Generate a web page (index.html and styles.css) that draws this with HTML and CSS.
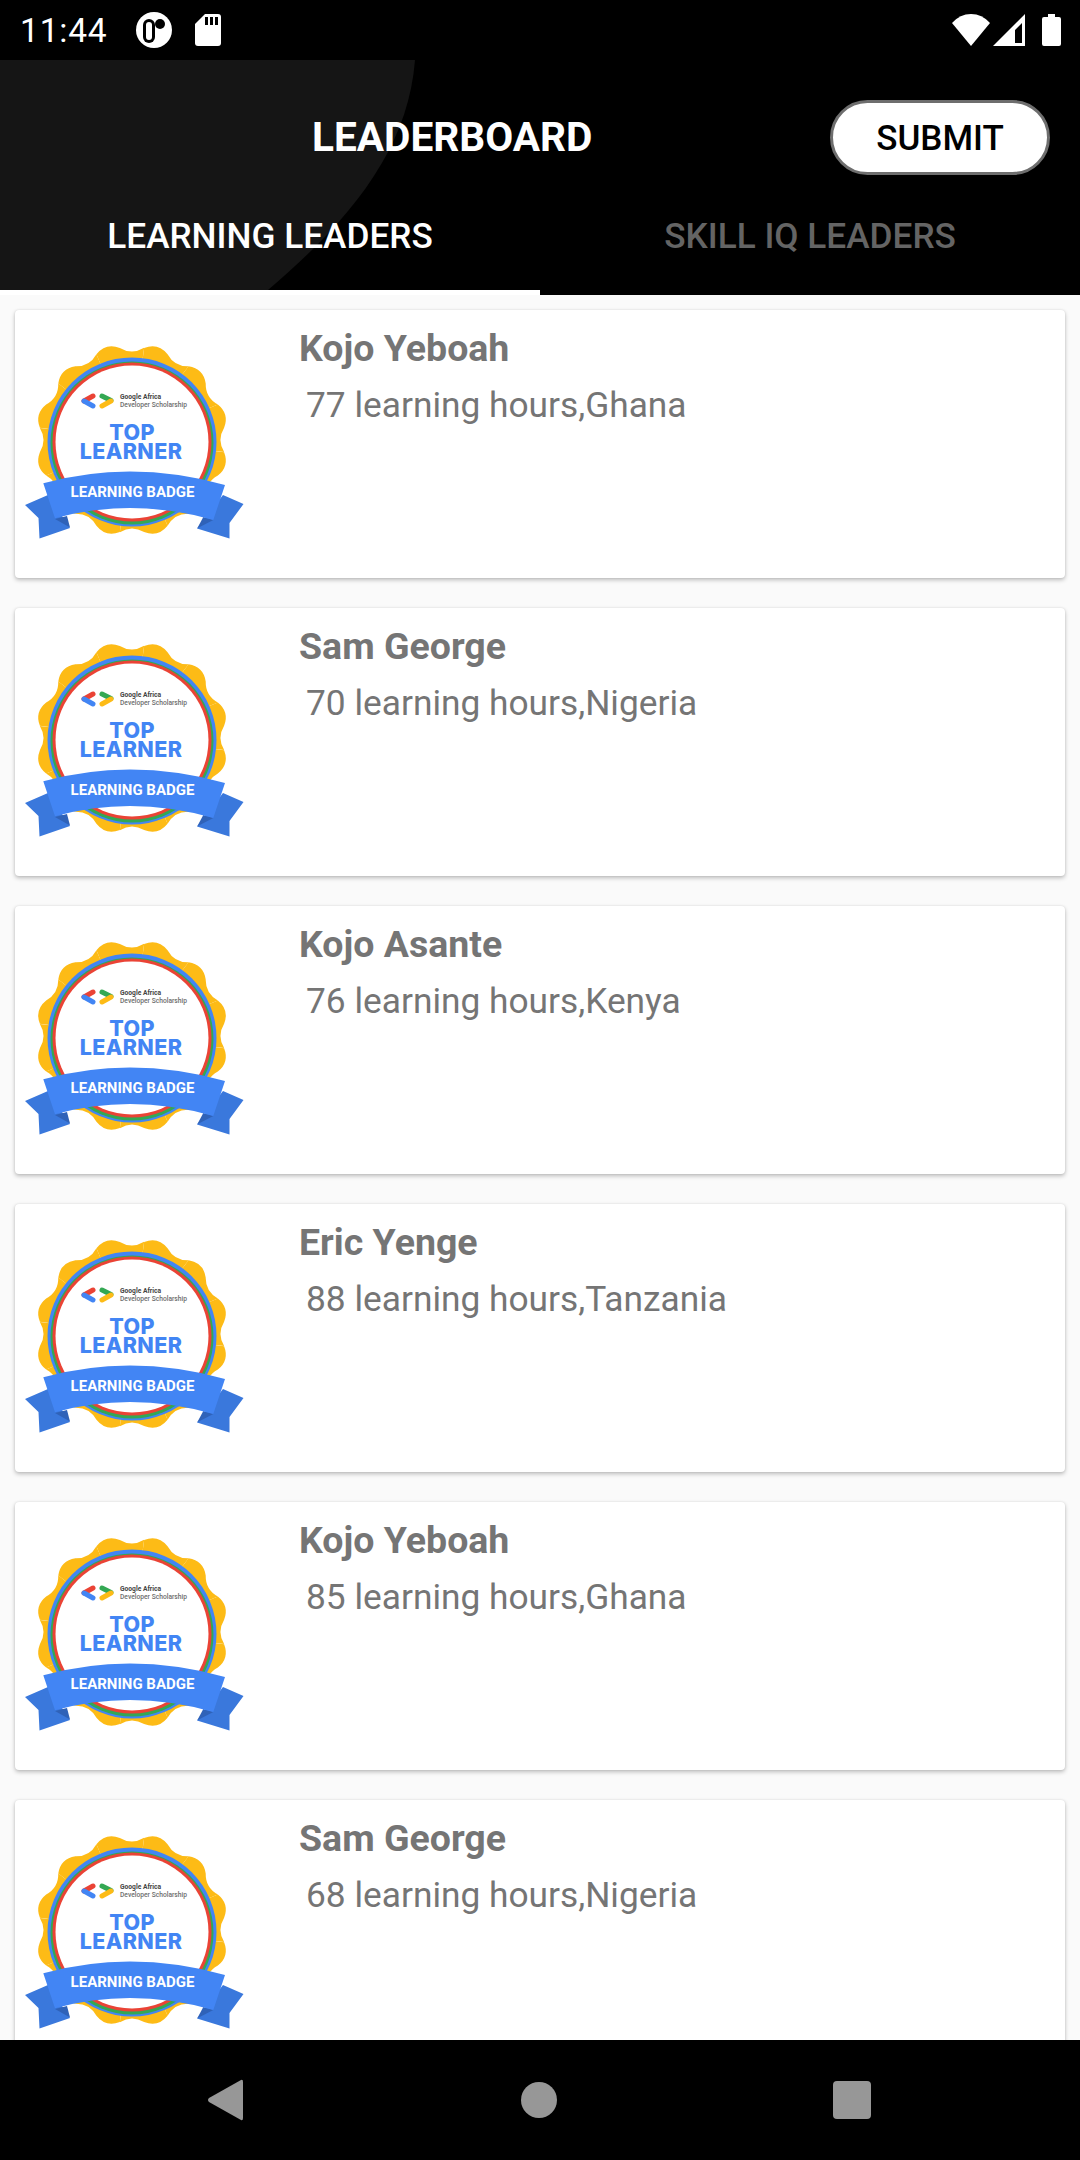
FILE: index.html
```html
<!DOCTYPE html>
<html lang="en">
<head>
<meta charset="utf-8">
<title>Leaderboard</title>
<link rel="stylesheet" href="styles.css">
</head>
<body>
<svg class="defs" width="0" height="0" aria-hidden="true">
  <defs>
    <path id="lobe" d="M0 0L-12 -91.2Q0 -100 12 -91.2Q21.7 -81.1 35.2 -85Z"/>
    <symbol id="badge" viewBox="0 0 240 210">
      <g transform="translate(110 100) scale(1.01)" fill="#fdbb16">
        <use href="#lobe" transform="rotate(15)"/><use href="#lobe" transform="rotate(45)"/>
        <use href="#lobe" transform="rotate(75)"/><use href="#lobe" transform="rotate(105)"/>
        <use href="#lobe" transform="rotate(135)"/><use href="#lobe" transform="rotate(165)"/>
        <use href="#lobe" transform="rotate(195)"/><use href="#lobe" transform="rotate(225)"/>
        <use href="#lobe" transform="rotate(255)"/><use href="#lobe" transform="rotate(285)"/>
        <use href="#lobe" transform="rotate(315)"/><use href="#lobe" transform="rotate(345)"/>
      </g>
      <circle cx="110" cy="102" r="84.5" fill="#4285f4"/>
      <circle cx="110" cy="103" r="81.5" fill="#34a853"/>
      <circle cx="110" cy="102" r="79.5" fill="#ea4335"/>
      <circle cx="110" cy="102" r="76.5" fill="#fff"/>
      <g fill="none" stroke-width="5" stroke-linecap="round">
        <path d="M71 56L62 61" stroke="#ea4335"/><path d="M62 61L71 66" stroke="#4285f4"/>
        <path d="M80 56L89 60.5" stroke="#34a853"/><path d="M89 61L80 66" stroke="#fdbb16"/>
      </g>
      <text class="b-small b-dark" x="98" y="58.5">Google Africa</text>
      <text class="b-small" x="98" y="66.8">Developer Scholarship</text>
      <text class="b-top" x="110" y="100" text-anchor="middle">TOP</text>
      <text class="b-top" x="109" y="119" text-anchor="middle">LEARNER</text>
      <path fill="#3a78dc" d="M3 165L26 155L48 188L17.5 198.5L16.5 178Z"/>
      <path fill="#3a78dc" d="M221.5 164L201 155L175 188.5L207.5 198.5L207.5 183Z"/>
      <path fill="#2f62b8" d="M33 179L45 176L48 187.5Z"/>
      <path fill="#2f62b8" d="M175.3 188.3L181.3 177L191.3 180Z"/>
      <path fill="#4285f4" d="M21.3 143.3Q110 119 203 145L191.3 180Q110 157 33 178.3Z"/>
      <text class="b-band" x="110.5" y="156.5" text-anchor="middle">LEARNING BADGE</text>
    </symbol>
  </defs>
</svg>
<div class="status">
  <span class="clock">11:44</span>
  <svg class="st-icon i-a" viewBox="0 0 36 36"><circle cx="18" cy="18" r="18" fill="#fff"/><rect x="7" y="7" width="12" height="24" rx="6" fill="#000"/><rect x="10" y="10" width="6" height="18" rx="3" fill="#fff"/><circle cx="24" cy="12" r="5" fill="#000"/></svg>
  <svg class="st-icon i-sd" viewBox="0 0 26 32"><path fill="#fff" d="M10 0H23Q26 0 26 3V29Q26 32 23 32H3Q0 32 0 29V10Z"/><path fill="#000" d="M10 3h3v8h-3zM15 3h3v8h-3zM20 3h3v8h-3z"/></svg>
  <span class="spacer"></span>
  <svg class="st-icon i-wifi" viewBox="0 0 38 32"><path fill="#fff" d="M19 32L0 9Q8 0 19 0T38 9Z"/></svg>
  <svg class="st-icon i-sig" viewBox="0 0 32 32"><path fill="#fff" fill-rule="evenodd" d="M32 0V32H0ZM29 9L22 16V29H29Z"/></svg>
  <svg class="st-icon i-bat" viewBox="0 0 19 32"><path fill="#fff" d="M6 0H13V3H17Q19 3 19 5V30Q19 32 17 32H2Q0 32 0 30V5Q0 3 2 3H6Z"/></svg>
</div>
<header class="head">
  <svg class="arc" viewBox="0 0 415 230" width="415" height="230"><path fill="#151515" d="M0 0H415C408 90 350 160 268 230H0Z"/></svg>
  <div class="titlebar">
    <h1 class="title">LEADERBOARD</h1>
    <button class="submit">SUBMIT</button>
  </div>
  <div class="tabs">
    <div class="tab active">LEARNING LEADERS</div>
    <div class="tab">SKILL IQ LEADERS</div>
  </div>
</header>
<main class="list">
  <article class="card"><svg class="badge"><use href="#badge"/></svg><div class="info"><div class="name">Kojo Yeboah</div><div class="sub">77 learning hours,Ghana</div></div></article>
  <article class="card"><svg class="badge"><use href="#badge"/></svg><div class="info"><div class="name">Sam George</div><div class="sub">70 learning hours,Nigeria</div></div></article>
  <article class="card"><svg class="badge"><use href="#badge"/></svg><div class="info"><div class="name">Kojo Asante</div><div class="sub">76 learning hours,Kenya</div></div></article>
  <article class="card"><svg class="badge"><use href="#badge"/></svg><div class="info"><div class="name">Eric Yenge</div><div class="sub">88 learning hours,Tanzania</div></div></article>
  <article class="card"><svg class="badge"><use href="#badge"/></svg><div class="info"><div class="name">Kojo Yeboah</div><div class="sub">85 learning hours,Ghana</div></div></article>
  <article class="card"><svg class="badge"><use href="#badge"/></svg><div class="info"><div class="name">Sam George</div><div class="sub">68 learning hours,Nigeria</div></div></article>
</main>
<nav class="nav">
  <svg class="nav-i" viewBox="0 0 36 42"><path fill="#979797" d="M34 1Q36 0 36 3V39Q36 42 34 41L2 23Q0 21 2 19Z"/></svg>
  <svg class="nav-i nav-home" viewBox="0 0 36 42"><circle cx="18" cy="21" r="18" fill="#979797"/></svg>
  <svg class="nav-i" viewBox="0 0 38 38"><rect width="38" height="38" rx="4" fill="#979797"/></svg>
</nav>
</body>
</html>
```
FILE: styles.css
```css
* { box-sizing: border-box; }
html, body { margin: 0; padding: 0; }
body {
  width: 1080px;
  height: 2160px;
  display: flex;
  flex-direction: column;
  overflow: hidden;
  background: #fafafa;
  font-family: Roboto, "Liberation Sans", sans-serif;
}
.defs { position: absolute; }
.status {
  height: 60px;
  flex: none;
  background: #000;
  display: flex;
  align-items: center;
  padding: 0 19px 0 20px;
  color: #fff;
}
.clock { font-size: 33.5px; letter-spacing: 0.8px; width: 116px; }
.spacer { flex: 1; }
.st-icon { display: block; flex: none; }
.i-a { width: 36px; height: 36px; }
.i-sd { width: 26px; height: 32px; margin-left: 23px; }
.i-wifi { width: 38px; height: 32px; }
.i-sig { width: 32px; height: 32px; margin-left: 3px; }
.i-bat { width: 19px; height: 32px; margin-left: 17px; }
.head { position: relative; background: #000; flex: none; height: 235px; }
.arc { position: absolute; left: 0; top: 0; display: block; }
.titlebar {
  position: relative;
  height: 155px;
  display: flex;
  align-items: center;
  padding: 0 30px 0 312px;
}
.title { margin: 0; flex: 1; color: #fff; font-size: 40.6px; font-weight: 700; line-height: 1; }
.submit {
  width: 220px;
  height: 75px;
  border: 3px solid #6e6e6e;
  border-radius: 38px;
  background: #fff;
  color: #000;
  font: 500 35px Roboto, sans-serif;
  padding: 2px 0 0;
}
.tabs { position: relative; display: flex; height: 80px; }
.tab {
  flex: 1;
  text-align: center;
  color: #646464;
  font-size: 35.2px;
  font-weight: 500;
  line-height: 42px;
}
.tab.active { color: #fff; border-bottom: 5px solid #fff; }
.list { flex: 1; min-height: 0; overflow: hidden; padding: 15px 15px 0; display: flex; flex-direction: column; gap: 30px; }
.card {
  flex: none;
  height: 268px;
  background: #fff;
  border-radius: 4px;
  box-shadow: 0 2px 4px rgba(0,0,0,.25), 0 0 2px rgba(0,0,0,.1);
  display: flex;
  align-items: flex-start;
}
.badge { width: 240px; height: 210px; margin: 30px 0 0 7px; flex: none; display: block; }
.info { padding: 16px 0 0 37px; }
.name { color: #757575; font-size: 37.5px; font-weight: 700; line-height: 44px; }
.sub { color: #757575; font-size: 35.3px; line-height: 44px; margin: 13px 0 0 7px; }
.nav {
  height: 120px;
  flex: none;
  background: #000;
  display: flex;
  align-items: center;
  justify-content: space-between;
  padding: 0 209px 0 207px;
}
.nav-i { width: 36px; height: 42px; display: block; }
.nav-home { margin-left: 2px; }
.nav-i:last-child { width: 38px; height: 38px; }
.b-small { font: 500 6.7px Roboto, sans-serif; fill: #6d6d6d; }
.b-dark { fill: #444; font-weight: 700; }
.b-top { font: 800 21.5px Inter, Roboto, sans-serif; fill: #4285f4; letter-spacing: .4px; }
.b-band { font: 700 15px Roboto, sans-serif; fill: #fff; }
```
